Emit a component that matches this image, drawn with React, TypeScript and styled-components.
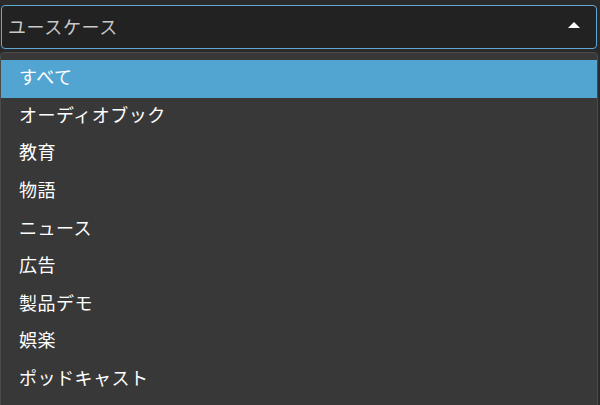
import React from 'react';
import styled, {createGlobalStyle} from 'styled-components';

const GlobalStyle = createGlobalStyle`
  html, body {
    margin: 0;
    padding: 0;
    background: #2a2a2a;
    font-family: "Noto Sans CJK JP", "Noto Sans", sans-serif;
  }
`;

const options = [
  'すべて',
  'オーディオブック',
  '教育',
  '物語',
  'ニュース',
  '広告',
  '製品デモ',
  '娯楽',
  'ポッドキャスト',
];

export default function App() {
  return (
    <Page>
      <GlobalStyle />
      <Select>
        <Value>ユースケース</Value>
        <Caret />
      </Select>
      <Menu>
        {options.map((o, i) => (
          <Item key={o} active={i === 0}>
            {o}
          </Item>
        ))}
      </Menu>
    </Page>
  );
}

const Page = styled.div`
  width: 600px;
  height: 405px;
  overflow: hidden;
  padding-top: 5px;
  box-sizing: border-box;
`;

const Select = styled.div`
  margin: 0 3px 0 1px;
  height: 44px;
  box-sizing: border-box;
  border: 1px solid #5fa9d3;
  border-radius: 4px;
  background: #222222;
  display: flex;
  align-items: center;
  justify-content: space-between;
  padding: 0 16px 2px 6px;
`;

const Value = styled.span`
  font-size: 18px;
  letter-spacing: 0.6px;
  color: #c8c8c8;
  line-height: 1;
`;

const Caret = styled.span`
  width: 0;
  height: 0;
  border-left: 6px solid transparent;
  border-right: 6px solid transparent;
  border-bottom: 6px solid #ffffff;
  margin-top: -2px;
`;

const Menu = styled.ul`
  list-style: none;
  margin: 3px 2px 0 0;
  padding: 7px 0 12px 0;
  background: #383838;
  border: 1px solid #4a4a4a;
  border-radius: 4px;
`;

const Item = styled.li<{active?: boolean}>`
  height: 37.6px;
  box-sizing: border-box;
  display: flex;
  align-items: center;
  padding: 0 0 5px 18px;
  font-size: 18px;
  letter-spacing: 0.5px;
  color: #ffffff;
  background: ${({active}) => (active ? '#52a5d0' : 'transparent')};
`;
